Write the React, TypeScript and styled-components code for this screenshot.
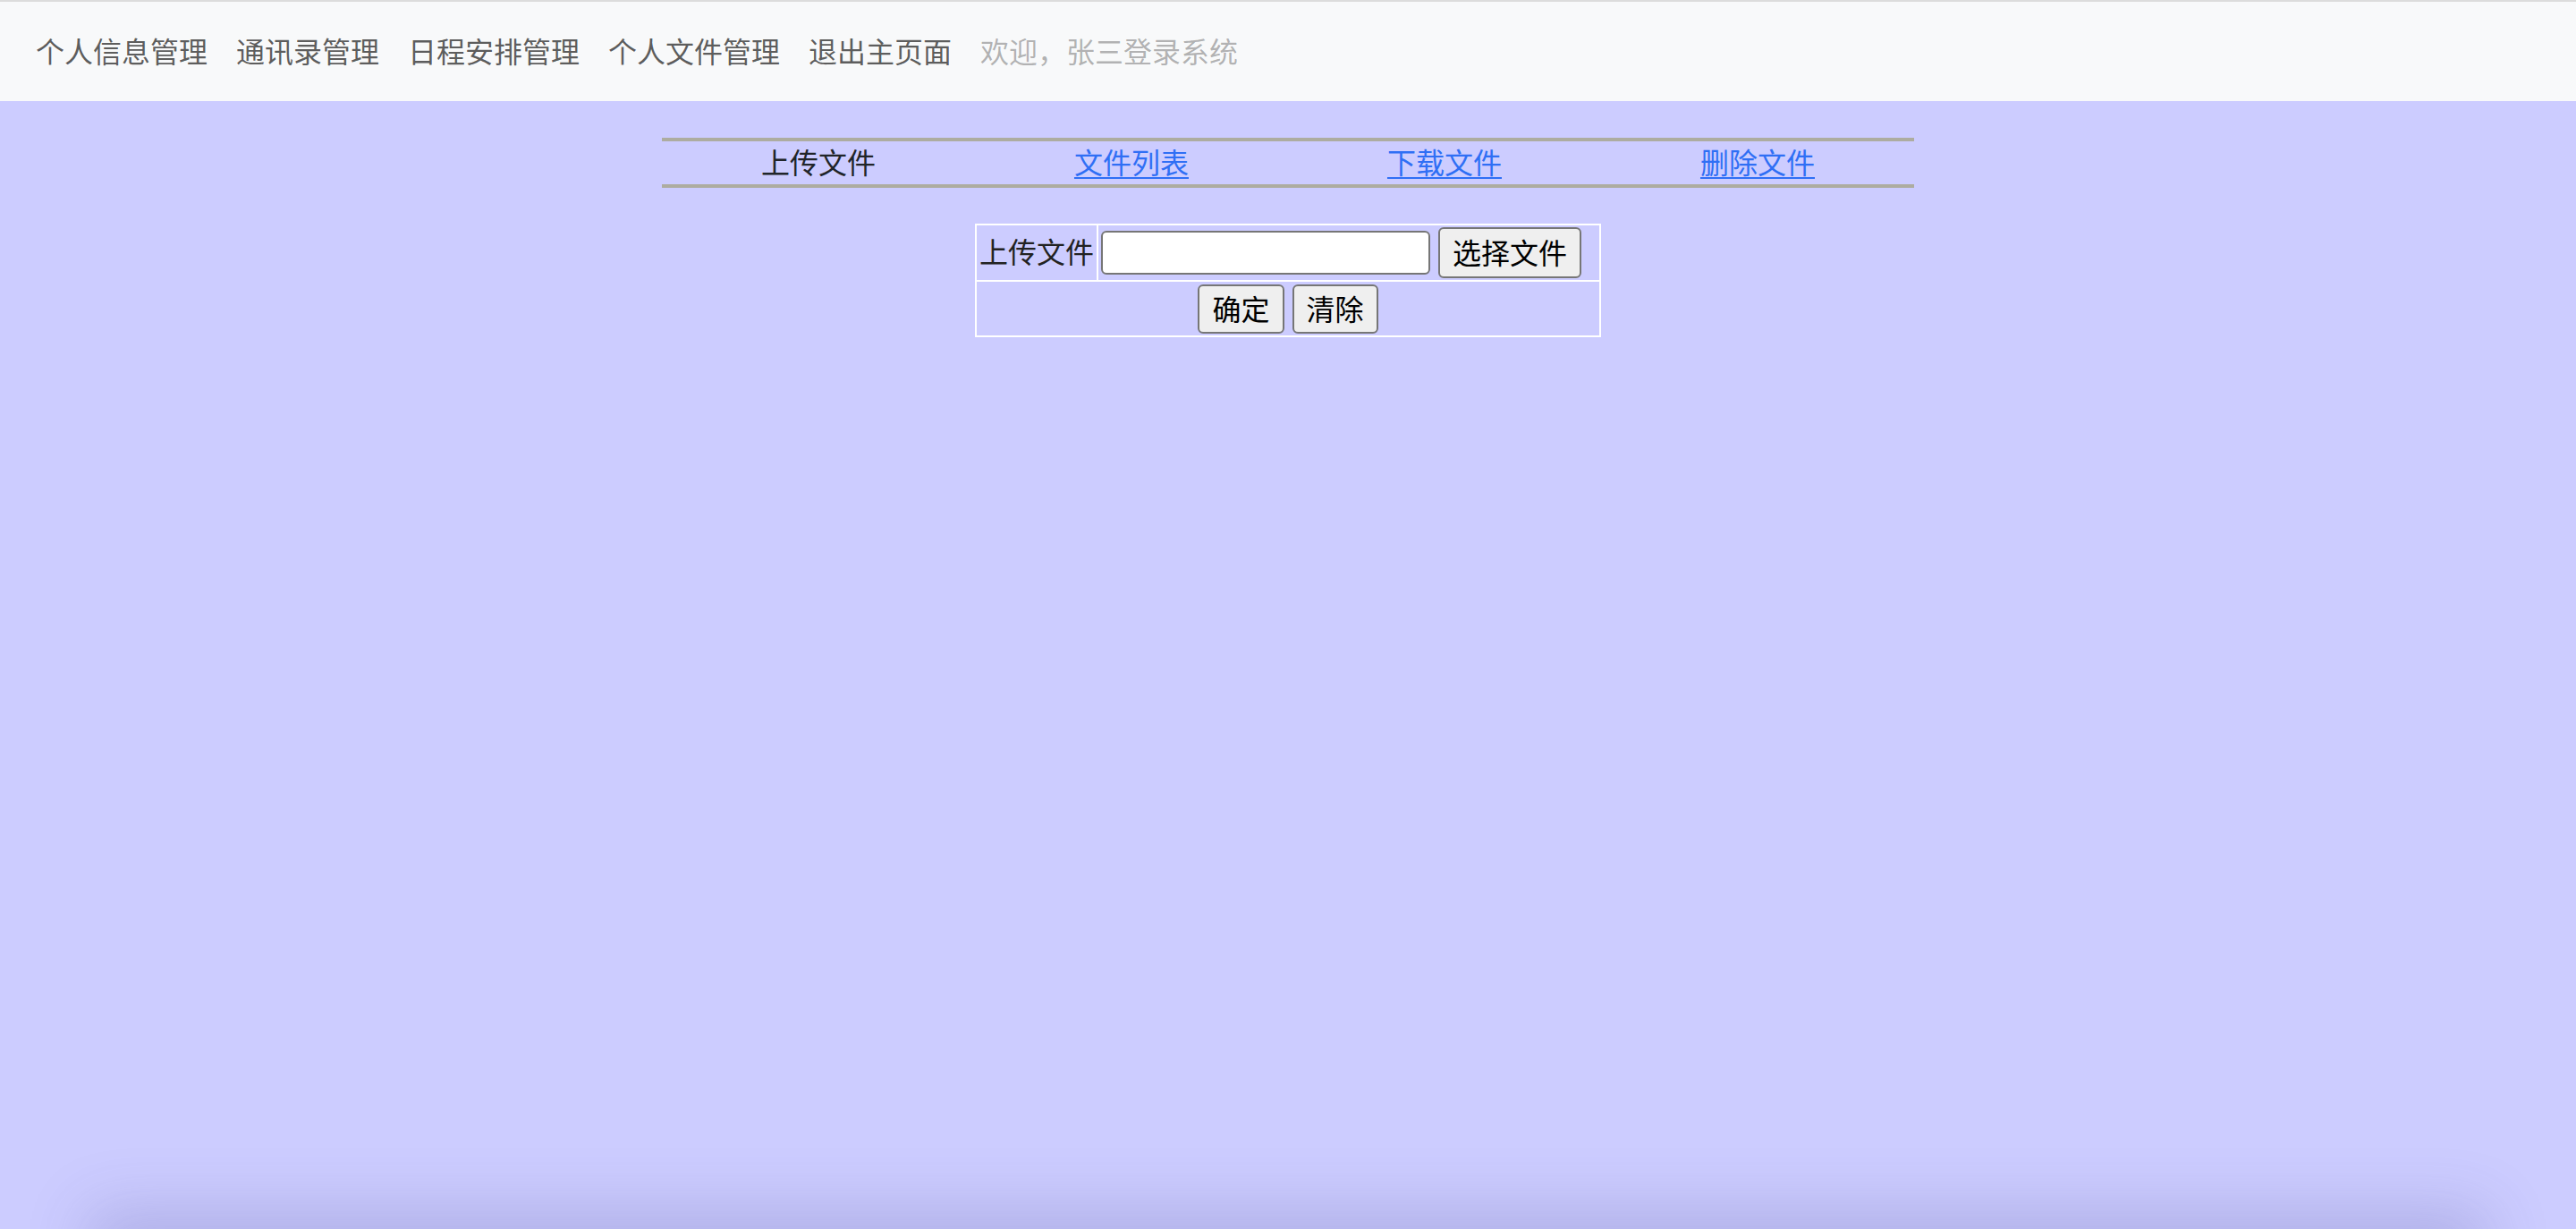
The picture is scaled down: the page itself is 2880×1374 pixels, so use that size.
import React from "react";
import styled, { createGlobalStyle } from "styled-components";

const GlobalStyle = createGlobalStyle`
  html, body {
    margin: 0;
    padding: 0;
    background: #ccccff;
    min-height: 100%;
  }
  body {
    font-family: "Noto Sans CJK SC", "Noto Sans", sans-serif;
    color: #212529;
  }
`;

const navItems = ["个人信息管理", "通讯录管理", "日程安排管理", "个人文件管理", "退出主页面"];

const tabs = [
  { label: "上传文件", active: true },
  { label: "文件列表", active: false },
  { label: "下载文件", active: false },
  { label: "删除文件", active: false },
];

const App: React.FC = () => {
  return (
    <Page>
      <GlobalStyle />
      <NavBar>
        {navItems.map((item) => (
          <NavLink key={item}>{item}</NavLink>
        ))}
        <NavLink $muted>欢迎，张三登录系统</NavLink>
      </NavBar>

      <Main>
        <TabBar>
          {tabs.map((t) => (
            <TabCell key={t.label}>
              {t.active ? <TabText>{t.label}</TabText> : <TabLink href="#">{t.label}</TabLink>}
            </TabCell>
          ))}
        </TabBar>

        <FormTable>
          <tbody>
            <tr>
              <LabelCell>上传文件</LabelCell>
              <FieldCell>
                <FieldRow>
                  <FileInput type="text" readOnly />
                  <Btn $h={57}>选择文件</Btn>
                </FieldRow>
              </FieldCell>
            </tr>
            <tr>
              <ActionCell colSpan={2}>
                <Actions>
                  <Btn $h={55}>确定</Btn>
                  <Btn $h={55}>清除</Btn>
                </Actions>
              </ActionCell>
            </tr>
          </tbody>
        </FormTable>
      </Main>

      <BottomShade />
    </Page>
  );
};

const Page = styled.div`
  min-height: 1374px;
  background: #ccccff;
`;

const NavBar = styled.nav`
  box-sizing: border-box;
  height: 113px;
  border-top: 2px solid #dcdcdc;
  background: #f8f9fa;
  display: flex;
  align-items: center;
  padding: 0 24px 4px;
`;

const NavLink = styled.span<{ $muted?: boolean }>`
  padding: 0 16px;
  font-size: 32px;
  line-height: 48px;
  color: ${(p) => (p.$muted ? "rgba(0, 0, 0, 0.3)" : "rgba(0, 0, 0, 0.65)")};
  white-space: nowrap;
`;

const Main = styled.main`
  padding-top: 41px;
`;

const TabBar = styled.div`
  width: 1400px;
  margin: 0 auto;
  border-top: 4px solid #adaca0;
  border-bottom: 4px solid #adaca0;
  display: grid;
  grid-template-columns: repeat(4, 1fr);
`;

const TabCell = styled.div`
  text-align: center;
  font-size: 32px;
  line-height: 44px;
  padding-bottom: 4px;
`;

const TabText = styled.span`
  color: #212529;
`;

const TabLink = styled.a`
  color: #2f6ff5;
  text-decoration: underline;
  text-underline-offset: 4px;
  text-decoration-thickness: 2px;
`;

const FormTable = styled.table`
  width: 700px;
  margin: 40px auto 0;
  border-collapse: collapse;
  border: 2px solid #ffffff;
  font-size: 32px;
`;

const LabelCell = styled.td`
  border: 2px solid #ffffff;
  padding: 0 3px 5px;
  white-space: nowrap;
  width: 128px;
  color: #222;
`;

const FieldCell = styled.td`
  border: 2px solid #ffffff;
  padding: 2px 3px;
`;

const FieldRow = styled.div`
  display: flex;
  align-items: center;
  gap: 9px;
`;

const FileInput = styled.input`
  box-sizing: border-box;
  width: 368px;
  height: 49px;
  border: 2px solid #767676;
  border-radius: 6px;
  background: #ffffff;
  outline: none;
`;

const ActionCell = styled.td`
  border: 2px solid #ffffff;
  padding: 3px 2px 2px;
`;

const Actions = styled.div`
  display: flex;
  justify-content: center;
  gap: 9px;
`;

const Btn = styled.button<{ $h: number }>`
  box-sizing: border-box;
  height: ${(p) => p.$h}px;
  padding: 0 14px 3px;
  border: 2px solid #767676;
  border-radius: 6px;
  background: #efefef;
  color: #000;
  font-family: "Noto Sans CJK SC", sans-serif;
  font-size: 32px;
  line-height: 1;
  white-space: nowrap;
`;

const BottomShade = styled.div`
  position: fixed;
  left: 120px;
  right: 120px;
  bottom: -40px;
  height: 40px;
  box-shadow: 0 0 70px 20px rgba(70, 70, 140, 0.22);
  pointer-events: none;
`;

export default App;
